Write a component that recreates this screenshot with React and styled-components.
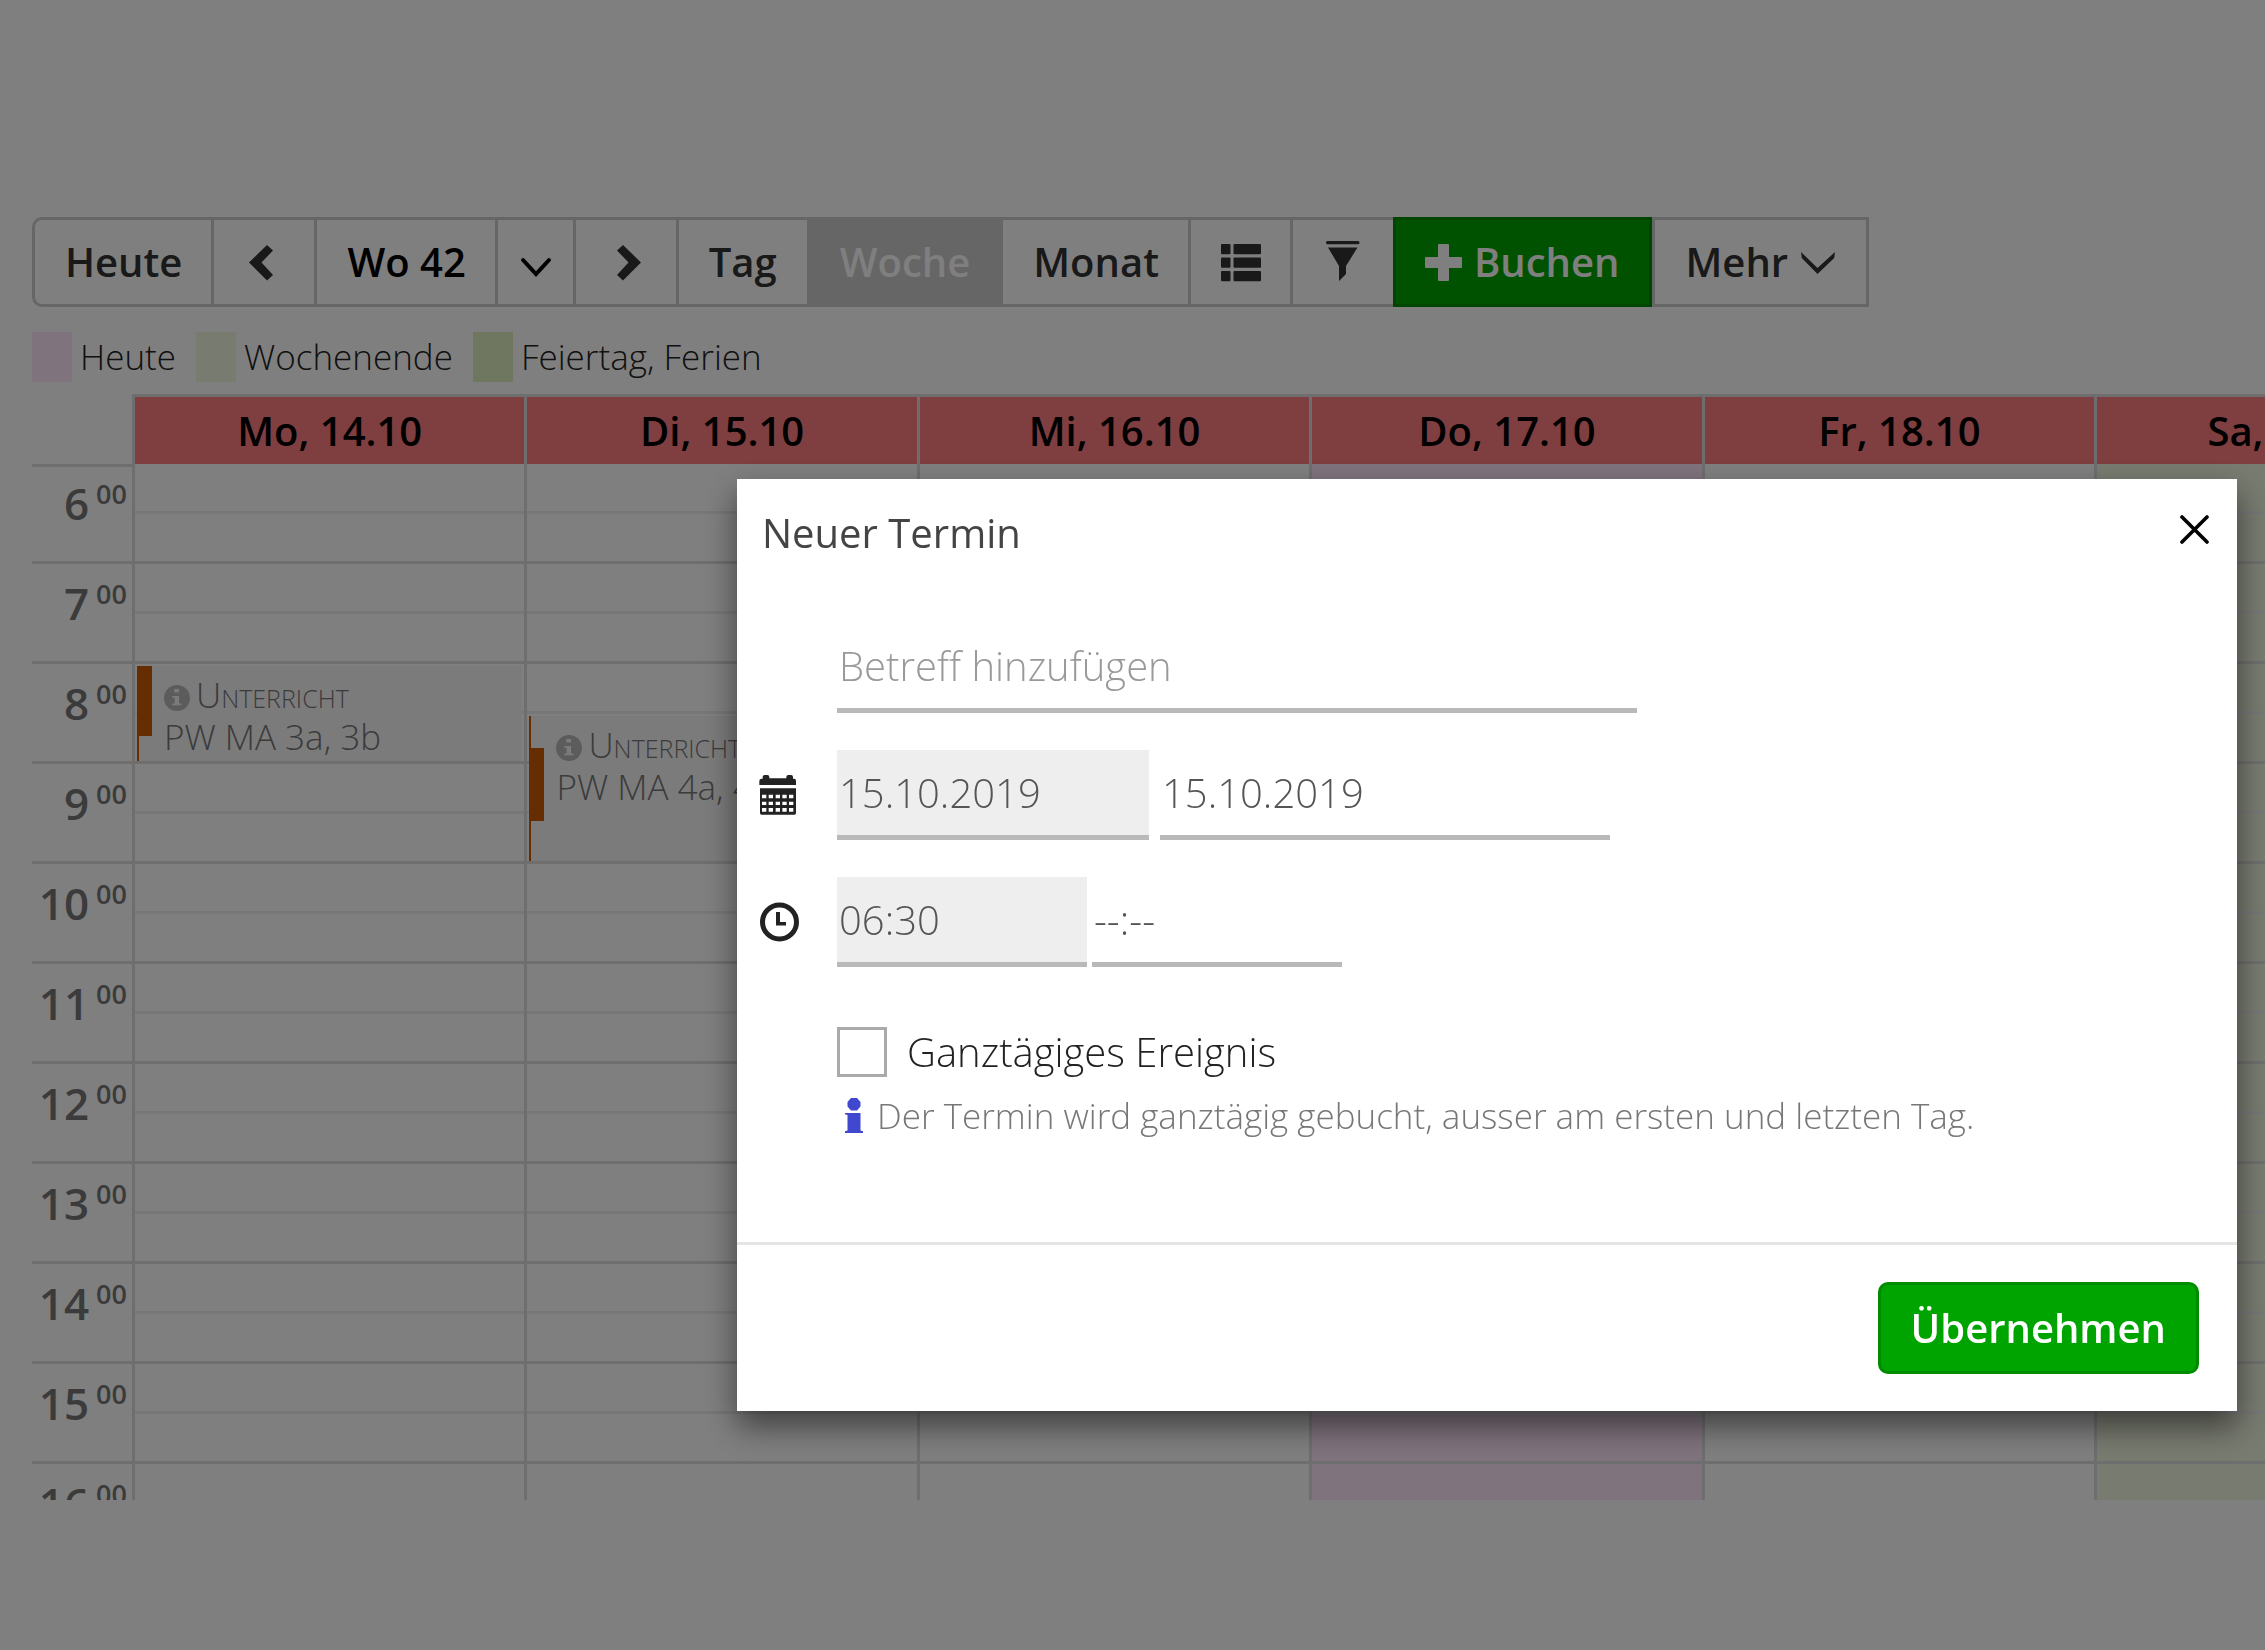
import React, { useState } from "react";
import styled, { createGlobalStyle } from "styled-components";

const HOURS = [6, 7, 8, 9, 10, 11, 12, 13, 14, 15, 16];

const DAYS = [
  {
    label: "Mo, 14.10",
    event: { top: 202, height: 95, barTop: 0, barHeight: 70, text: "PW MA 3a, 3b" },
  },
  {
    label: "Di, 15.10",
    event: { top: 252, height: 145, barTop: 32, barHeight: 73, text: "PW MA 4a, 4b" },
  },
  { label: "Mi, 16.10" },
  { label: "Do, 17.10", kind: "today" },
  { label: "Fr, 18.10" },
  { label: "Sa, 19.10", kind: "weekend" },
  { label: "So, 20.10", kind: "weekend" },
];

const COLORS = {
  today: "#ffe6fa",
  weekend: "#f0f6e0",
  holiday: "#deefc1",
};

const ChevronLeft = () => (
  <Icon viewBox="0 0 40 40" aria-hidden="true">
    <path d="M5 20.5 23 3l6 5.5-11.500 12L29 33l-6 5.500z" />
  </Icon>
);

const ChevronRight = () => (
  <Icon viewBox="0 0 40 40" aria-hidden="true">
    <path d="M35 20.500 17 3l-6 5.500 11.500 12L11 33l6 5.500z" />
  </Icon>
);

const ListIcon = () => (
  <Icon viewBox="0 0 40 40" aria-hidden="true">
    {[2, 15.5, 29].map((y) => (
      <g key={y}>
        <rect x="0" y={y} width="9.5" height="10.3" rx="1" />
        <rect x="12.5" y={y} width="27.5" height="10.3" rx="1" />
      </g>
    ))}
  </Icon>
);

const FilterIcon = () => (
  <Icon viewBox="0 0 40 40" aria-hidden="true">
    <rect x="3" y="-1" width="33.5" height="3.2" rx="1.5" />
    <path d="M5 5.500h29.500L23 24v8l-7 7V24z" />
  </Icon>
);

const PlusIcon = () => (
  <Icon viewBox="0 0 40 40" aria-hidden="true">
    <path d="M13 2h9q1 0 1 1v12h12q1 0 1 1v9q0 1-1 1H23v12q0 1-1 1h-9q-1 0-1-1V26H0q-1 0-1-1v-9q0-1 1-1h12V3q0-1 1-1z" />
  </Icon>
);

const MenuDown = () => (
  <Icon viewBox="0 0 40 40" aria-hidden="true">
    <path d="M5 10l16.500 16L39 10l-.8 6L21.500 32 5.800 16z" />
  </Icon>
);

const InfoCircle = () => (
  <InfoCircleSvg viewBox="0 0 76 76" aria-hidden="true">
    <circle cx="38" cy="38" r="38" fill="#b8b8b8" />
    <path
      d="M30 12h14v10H30zM24 32h20v22h7v5H24v-5h7V37h-7z"
      fill="#f6f6f6"
    />
  </InfoCircleSvg>
);

const CalendarIcon = () => (
  <RowIcon viewBox="0 0 114 120" aria-hidden="true">
    <path d="M1 30V18q0-7 7-7h3V6q0-6 6-6h8q6 0 6 6v4h51V6q0-6 6-6h8q6 0 6 6v5h3q6 0 6 7v12z" />
    <path
      fillRule="evenodd"
      d="M3 40h108v74q0 5-5 5H8q-5 0-5-5zM9 59v11h13V59zM29 59v11h13V59zM50 59v11h13V59zM70 59v11h13V59zM90 59v11h13V59zM9 80v10h13V80zM29 80v10h13V80zM50 80v10h13V80zM70 80v10h13V80zM90 80v10h13V80zM9 99v11h13V99zM29 99v11h13V99zM50 99v11h13V99zM70 99v11h13V99zM90 99v11h13V99z"
    />
  </RowIcon>
);

const ClockIcon = () => (
  <RowIcon viewBox="0 0 38 40" aria-hidden="true">
    <circle cx="20.5" cy="20" r="17" fill="none" stroke="#222" strokeWidth="5" />
    <path d="M17 10h4v10h6v3.500H17z" />
  </RowIcon>
);

const EventEntry = ({ event }) => (
  <Event style={{ top: event.top, height: event.height }}>
    <EventBar style={{ top: event.barTop, height: event.barHeight }} />
    <EventTitle>
      <InfoCircle />
      Unterricht
    </EventTitle>
    <div>{event.text}</div>
  </Event>
);

const NewEventModal = ({ onClose }) => {
  const [input, setInput] = useState({
    subject: "",
    startDate: "15.10.2019",
    endDate: "15.10.2019",
    startTime: "06:30",
    endTime: "--:--",
    allDay: false,
  });

  const handleInputChange = (e) => {
    const { name, value, type, checked } = e.target;
    setInput({ ...input, [name]: type === "checkbox" ? checked : value });
  };

  const handleSubmit = (e) => {
    e.preventDefault();
    onClose();
  };

  return (
    <Overlay>
      <Dialog role="dialog" aria-labelledby="dialogTitle" onSubmit={handleSubmit}>
        <DialogHeader>
          <DialogTitle id="dialogTitle">Neuer Termin</DialogTitle>
          <CloseButton type="button" aria-label="Schliessen" onClick={onClose}>
            <svg width="29" height="29" viewBox="0 0 29 29">
              <path
                d="M2 2l25 25M27 2L2 27"
                stroke="#000"
                strokeWidth="3.600"
                strokeLinecap="round"
              />
            </svg>
          </CloseButton>
        </DialogHeader>
        <DialogBody>
          <Fields>
            <FieldRow>
              <IconCell />
              <SubjectInput
                type="text"
                name="subject"
                aria-label="Betreff"
                placeholder="Betreff hinzufügen"
                value={input.subject}
                onChange={handleInputChange}
              />
            </FieldRow>
            <FieldRow>
              <IconCell>
                <CalendarIcon />
              </IconCell>
              <DateGroup>
                <StartDateInput
                  type="text"
                  name="startDate"
                  aria-label="Startdatum"
                  value={input.startDate}
                  onChange={handleInputChange}
                />
                <EndDateInput
                  type="text"
                  name="endDate"
                  aria-label="Enddatum"
                  value={input.endDate}
                  onChange={handleInputChange}
                />
              </DateGroup>
            </FieldRow>
            <FieldRow>
              <IconCell>
                <ClockIcon />
              </IconCell>
              <TimeGroup>
                <TimeInput
                  type="text"
                  name="startTime"
                  aria-label="Startzeit"
                  $filled
                  value={input.startTime}
                  onChange={handleInputChange}
                />
                <TimeInput
                  type="text"
                  name="endTime"
                  aria-label="Endzeit"
                  value={input.endTime}
                  onChange={handleInputChange}
                />
              </TimeGroup>
            </FieldRow>
          </Fields>
          <CheckRow>
            <Checkbox
              type="checkbox"
              id="allDay"
              name="allDay"
              checked={input.allDay}
              onChange={handleInputChange}
            />
            <CheckLabel htmlFor="allDay">Ganztägiges Ereignis</CheckLabel>
          </CheckRow>
          <Hint>
            <HintIcon viewBox="0 0 18 36" aria-hidden="true">
              <path d="M6 0h6l3.500 4v4.500l-3.500 4H6l-3.500-4V4zM0 15h15.500v17.500l2.500.8V35H0v-1.700l2.500-.8V17L0 16.300z" />
            </HintIcon>
            Der Termin wird ganztägig gebucht, ausser am ersten und letzten Tag.
          </Hint>
        </DialogBody>
        <DialogFooter>
          <SubmitButton type="submit">Übernehmen</SubmitButton>
        </DialogFooter>
      </Dialog>
    </Overlay>
  );
};

const App = () => {
  const [modal, setModal] = useState(true);

  return (
    <>
      <GlobalStyle />
      <Page>
        <Toolbar>
          <ToolButton type="button">Heute</ToolButton>
          <ToolButton type="button" $icon aria-label="Vorherige Woche">
            <ChevronLeft />
          </ToolButton>
          <ToolButton type="button" $dark>
            Wo 42
          </ToolButton>
          <ToolButton type="button" $icon $narrow aria-label="Woche wählen">
            <PickerArrow viewBox="0 0 32 40" aria-hidden="true">
              <path d="M3 18l13 14 13-14" />
            </PickerArrow>
          </ToolButton>
          <ToolButton type="button" $icon aria-label="Nächste Woche">
            <ChevronRight />
          </ToolButton>
          <ToolButton type="button">Tag</ToolButton>
          <ToolButton type="button" $active>
            Woche
          </ToolButton>
          <ToolButton type="button">Monat</ToolButton>
          <ToolButton type="button" $icon aria-label="Liste">
            <ListIcon />
          </ToolButton>
          <ToolButton type="button" $icon aria-label="Filter">
            <FilterIcon />
          </ToolButton>
          <BookButton type="button" onClick={() => setModal(true)}>
            <PlusIcon />
            Buchen
          </BookButton>
          <ToolButton type="button">
            Mehr
            <MenuDown />
          </ToolButton>
        </Toolbar>
        <Legend>
          <LegendItem>
            <Swatch $color={COLORS.today} />
            Heute
          </LegendItem>
          <LegendItem>
            <Swatch $color={COLORS.weekend} />
            Wochenende
          </LegendItem>
          <LegendItem>
            <Swatch $color={COLORS.holiday} />
            Feiertag, Ferien
          </LegendItem>
        </Legend>
        <Calendar>
          <Week>
            <TimeColumn>
              <Corner />
              {HOURS.map((hour, index) => (
                <TimeLabel key={hour} $first={index === 0}>
                  {hour}
                  <Minutes>00</Minutes>
                </TimeLabel>
              ))}
            </TimeColumn>
            {DAYS.map((day) => (
              <DayColumn key={day.label}>
                <DayHeader>{day.label}</DayHeader>
                <DayBody $color={COLORS[day.kind]}>
                  {HOURS.map((hour) => (
                    <Hour key={hour}>
                      <HalfHour />
                    </Hour>
                  ))}
                  {day.event && <EventEntry event={day.event} />}
                </DayBody>
              </DayColumn>
            ))}
          </Week>
        </Calendar>
      </Page>
      {modal && <NewEventModal onClose={() => setModal(false)} />}
    </>
  );
};

const GlobalStyle = createGlobalStyle`
  * {
    box-sizing: border-box;
  }
  body {
    margin: 0;
    background: #fff;
    color: #222;
    font-family: "Open Sans", "Noto Sans", sans-serif;
    font-weight: 300;
  }
  button, input {
    font-family: inherit;
    margin: 0;
  }
`;

const Page = styled.main`
  display: flex;
  flex-direction: column;
  height: 100vh;
  padding: 217px 0 150px 32px;
  overflow: hidden;
`;

const Toolbar = styled.div`
  display: flex;
  flex-shrink: 0;
`;

const ToolButton = styled.button`
  display: flex;
  align-items: center;
  gap: 8px;
  height: 90px;
  padding: ${({ $narrow }) => ($narrow ? "0 22px" : "0 30px")};
  margin-left: ${({ $icon }) => ($icon ? "-4px" : "-3px")};
  border: 3px solid #ccc;
  background: ${({ $active }) => ($active ? "#ccc" : "#fff")};
  color: ${({ $active, $dark }) => ($active ? "#fff" : $dark ? "#000" : "#333")};
  font-size: 40px;
  font-weight: 600;
  line-height: 54px;
  cursor: pointer;

  &:first-child {
    margin-left: 0;
    border-radius: 10px 0 0 10px;
  }
`;

const BookButton = styled(ToolButton)`
  position: relative;
  background: #00a400;
  border-color: #008b00;
  color: #fff;

  & + button {
    margin-left: 0;
  }
`;

const Icon = styled.svg`
  width: 40px;
  height: 40px;
  fill: currentColor;
  overflow: visible;
`;

const PickerArrow = styled.svg`
  width: 32px;
  height: 40px;
  fill: none;
  stroke: #000;
  stroke-width: 4;
  stroke-linecap: round;
`;

const Legend = styled.div`
  display: flex;
  flex-shrink: 0;
  gap: 20px;
  margin: 25px 0 12px;
  font-size: 35px;
  line-height: 48px;
`;

const LegendItem = styled.div`
  display: flex;
  align-items: center;
  gap: 8px;
`;

const Swatch = styled.span`
  width: 40px;
  height: 50px;
  background: ${({ $color }) => $color};
`;

const Calendar = styled.section`
  flex: 1;
  min-height: 0;
  overflow: hidden;
`;

const Week = styled.div`
  display: grid;
  grid-template-columns: 100px repeat(7, 1fr);
  width: 100%;
  min-width: 2847px;
`;

const TimeColumn = styled.div`
  color: #777;
`;

const Corner = styled.div`
  height: 73px;
  border-bottom: 3px solid #dcdcdc;
`;

const TimeLabel = styled.div`
  display: flex;
  align-items: flex-start;
  align-content: flex-end;
  flex-wrap: wrap;
  justify-content: flex-end;
  gap: 7px;
  height: ${({ $first }) => ($first ? "97px" : "100px")};
  padding: 0 5px 28px 0;
  border-bottom: 3px solid #dcdcdc;
  font-size: 44px;
  font-weight: 600;
  line-height: 60px;
`;

const Minutes = styled.span`
  font-size: 27px;
  line-height: 42px;
`;

const DayColumn = styled.div`
  border-left: 3px solid #dcdcdc;
`;

const DayHeader = styled.div`
  height: 70px;
  border-top: 3px solid #dcdcdc;
  background: #ff7c80;
  color: #000;
  font-size: 40px;
  font-weight: 600;
  line-height: 67px;
  text-align: center;
`;

const DayBody = styled.div`
  position: relative;
  background: ${({ $color }) => $color || "#fff"};
`;

const Hour = styled.div`
  height: 100px;
  border-bottom: 3px solid #dcdcdc;
`;

const HalfHour = styled.div`
  height: 50px;
  border-bottom: 3px solid #eee;
`;

const Event = styled.div`
  position: absolute;
  left: 2px;
  right: 2px;
  padding: 8px 0 0 27px;
  background: #f6f6f6;
  box-shadow: inset 2px 0 #cc5a00;
  color: #777;
  font-size: 35px;
  line-height: 42px;
  white-space: nowrap;
`;

const EventBar = styled.span`
  position: absolute;
  left: 0;
  width: 15px;
  background: #cc5a00;
`;

const EventTitle = styled.div`
  display: flex;
  align-items: center;
  gap: 6px;
  font-variant: small-caps;
`;

const InfoCircleSvg = styled.svg`
  width: 26px;
  height: 26px;
  margin-top: 5px;
`;

const Overlay = styled.div`
  position: fixed;
  inset: 0;
  display: flex;
  align-items: flex-start;
  justify-content: flex-end;
  padding: 479px 28px 0;
  background: rgba(0, 0, 0, 0.5);
`;

const Dialog = styled.form`
  width: 100%;
  max-width: 1500px;
  background: #fff;
  box-shadow: 0 15px 30px rgba(0, 0, 0, 0.5);
`;

const DialogHeader = styled.div`
  display: flex;
  align-items: flex-start;
  justify-content: space-between;
  padding: 26px 28px 0 25px;
`;

const DialogTitle = styled.h1`
  margin: 0;
  color: #444;
  font-size: 40px;
  font-weight: 400;
  line-height: 56px;
`;

const CloseButton = styled.button`
  display: flex;
  padding: 10px 0;
  border: none;
  background: none;
  cursor: pointer;
`;

const DialogBody = styled.div`
  padding: 62px 22px 102px;
`;

const Fields = styled.div`
  display: flex;
  flex-direction: column;
  gap: 37px;
`;

const FieldRow = styled.div`
  display: flex;
  align-items: center;
`;

const IconCell = styled.div`
  display: flex;
  flex-shrink: 0;
  width: 78px;
`;

const RowIcon = styled.svg`
  width: 38px;
  height: 40px;
  fill: #222;
  overflow: visible;
`;

const DateGroup = styled.div`
  display: flex;
  gap: 11px;
`;

const TimeGroup = styled.div`
  display: flex;
  gap: 5px;
`;

const TextInput = styled.input`
  height: 90px;
  padding: 0 2px;
  border: none;
  border-bottom: 5px solid #b9b9b9;
  border-radius: 0;
  background: ${({ $filled }) => ($filled ? "#eee" : "#fff")};
  color: #555;
  font-size: 40px;
  font-weight: 300;
  outline: none;

  &::placeholder {
    color: #999;
    opacity: 1;
  }
`;

const SubjectInput = styled(TextInput)`
  width: 800px;
`;

const StartDateInput = styled(TextInput)`
  width: 312px;
  background: #eee;
`;

const EndDateInput = styled(TextInput)`
  width: 450px;
`;

const TimeInput = styled(TextInput)`
  width: 250px;
`;

const CheckRow = styled.div`
  display: flex;
  align-items: center;
  gap: 20px;
  margin: 60px 0 15px 78px;
`;

const Checkbox = styled.input`
  appearance: none;
  width: 50px;
  height: 50px;
  border: 3px solid #aaa;
  background: #fff;

  &:checked {
    background: #aaa;
  }
`;

const CheckLabel = styled.label`
  font-size: 40px;
  line-height: 50px;
`;

const Hint = styled.p`
  display: flex;
  align-items: center;
  gap: 14px;
  margin: 0 0 0 78px;
  padding-left: 8px;
  color: #777;
  font-size: 35px;
  line-height: 48px;
`;

const HintIcon = styled.svg`
  width: 18px;
  height: 36px;
  fill: #4048d0;
`;

const DialogFooter = styled.div`
  display: flex;
  justify-content: flex-end;
  padding: 37px 38px;
  border-top: 3px solid #e5e5e5;
`;

const SubmitButton = styled.button`
  height: 92px;
  padding: 0 30px;
  border: 3px solid #008b00;
  border-radius: 10px;
  background: #00a400;
  color: #fff;
  font-size: 40px;
  font-weight: 600;
  line-height: 54px;
  cursor: pointer;
`;

export default App;
